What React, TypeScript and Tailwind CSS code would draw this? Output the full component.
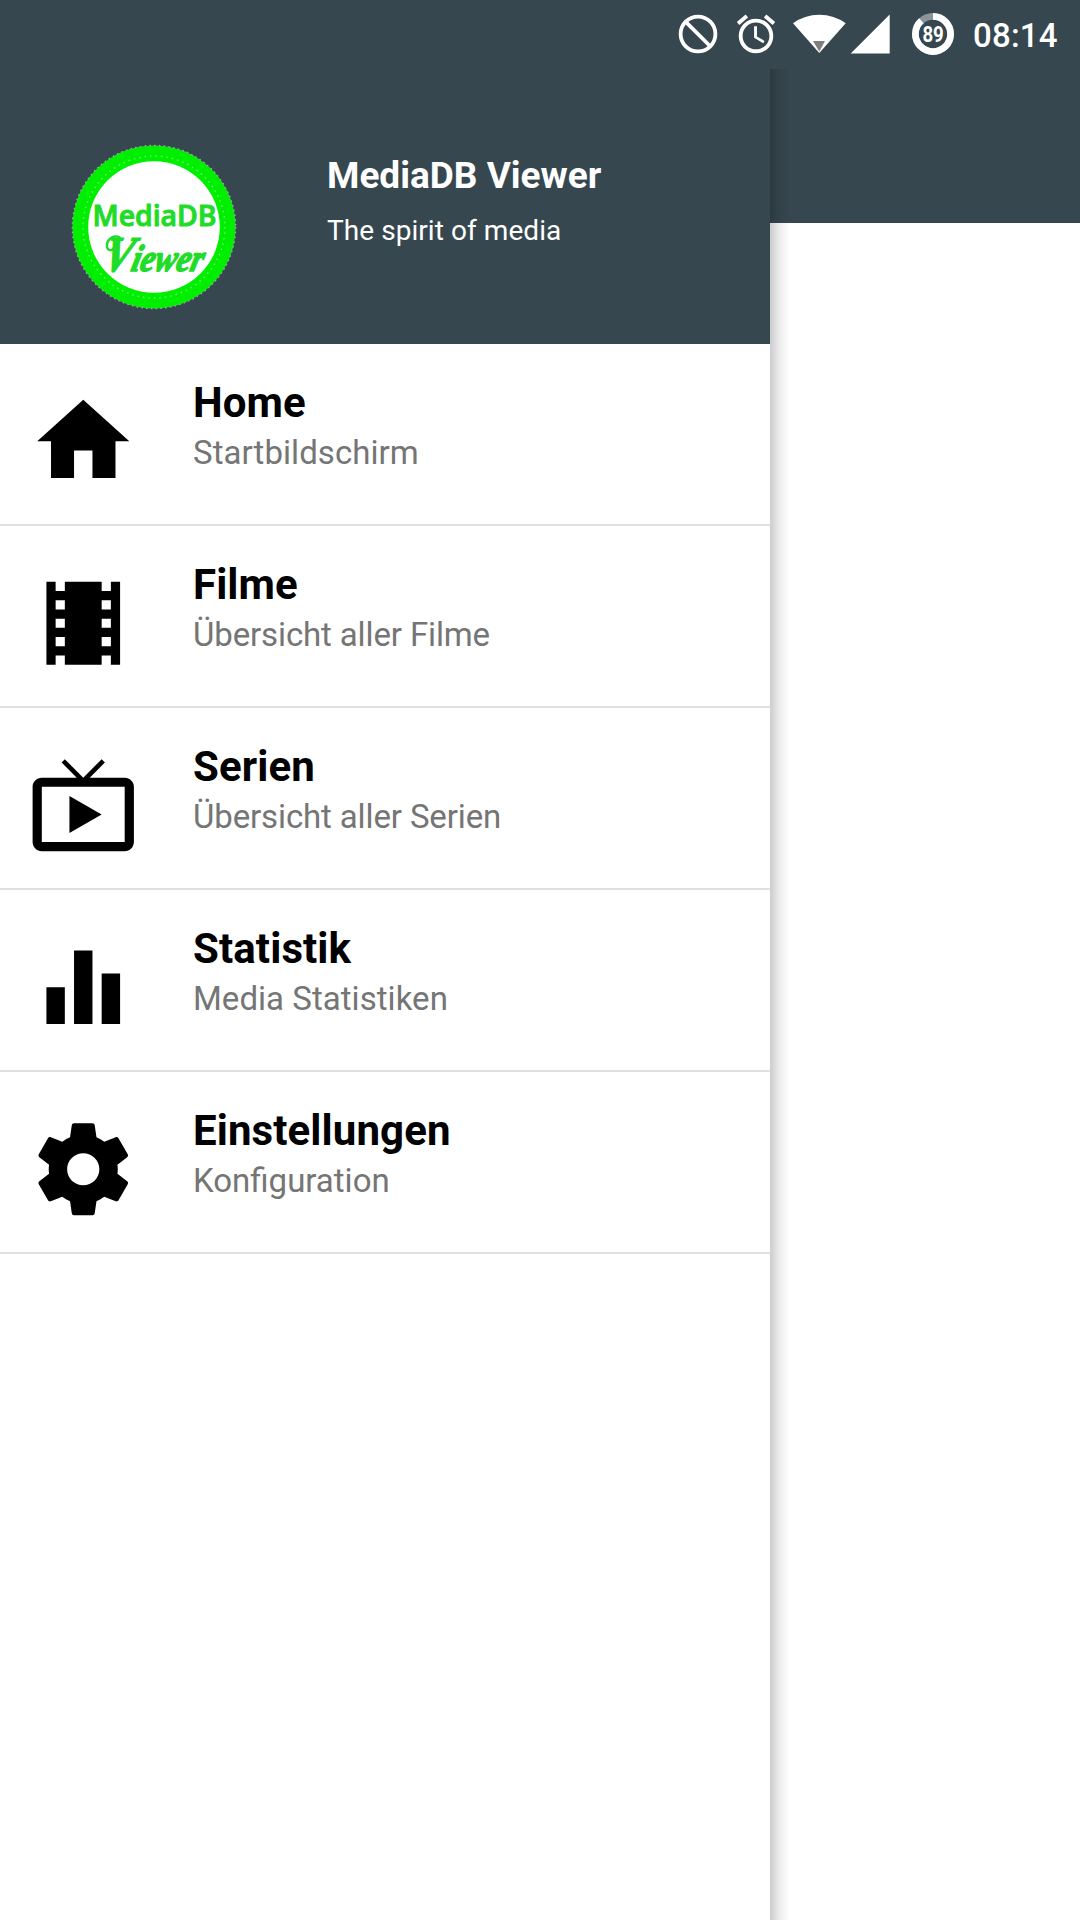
import React from "react";

const icons = {
  home: "M10 20v-6h4v6h5v-8h3L12 3 2 12h3v8z",
  movies:
    "M18 3v2h-2V3H8v2H6V3H4v18h2v-2h2v2h8v-2h2v2h2V3h-2zM8 17H6v-2h2v2zm0-4H6v-2h2v2zm0-4H6V7h2v2zm10 8h-2v-2h2v2zm0-4h-2v-2h2v2zm0-4h-2V7h2v2z",
  series:
    "M21 6h-7.59l3.29-3.29L16 2l-4 4-4-4-.7.71L10.59 6H3c-1.1 0-2 .89-2 2v12c0 1.1.9 2 2 2h18c1.1 0 2-.9 2-2V8c0-1.11-.9-2-2-2zm0 14H3V8h18v12zM9 10v8l7-4z",
  stats: "M4 20h4v-8H4v8zM10 20h4V4h-4v16zM16 9v11h4V9h-4z",
  settings:
    "M19.43 12.98c.04-.32.07-.64.07-.98s-.03-.66-.07-.98l2.11-1.65c.19-.15.24-.42.12-.64l-2-3.46c-.12-.22-.39-.3-.61-.22l-2.49 1c-.52-.4-1.08-.73-1.69-.98l-.38-2.65C14.46 2.18 14.25 2 14 2h-4c-.25 0-.46.18-.49.42l-.38 2.65c-.61.25-1.17.59-1.69.98l-2.49-1c-.23-.09-.49 0-.61.22l-2 3.46c-.13.22-.07.49.12.64l2.11 1.65c-.04.32-.07.65-.07.98s.03.66.07.98l-2.11 1.65c-.19.15-.24.42-.12.64l2 3.46c.12.22.39.3.61.22l2.49-1c.52.4 1.08.73 1.69.98l.38 2.65c.03.24.24.42.49.42h4c.25 0 .46-.18.49-.42l.38-2.65c.61-.25 1.17-.59 1.69-.98l2.49 1c.23.09.49 0 .61-.22l2-3.46c.12-.22.07-.49-.12-.64l-2.11-1.65zM12 15.5c-1.93 0-3.5-1.57-3.5-3.5s1.57-3.5 3.5-3.5 3.5 1.57 3.5 3.5-1.57 3.5-3.5 3.5z",
};

const items = [
  { icon: icons.home, title: "Home", subtitle: "Startbildschirm", tracking: "tracking-[0.06px]" },
  { icon: icons.movies, title: "Filme", subtitle: "Übersicht aller Filme", tracking: "tracking-[-0.13px]" },
  { icon: icons.series, title: "Serien", subtitle: "Übersicht aller Serien", tracking: "tracking-[-0.13px]" },
  { icon: icons.stats, title: "Statistik", subtitle: "Media Statistiken", tracking: "tracking-[0.04px]" },
  { icon: icons.settings, title: "Einstellungen", subtitle: "Konfiguration", tracking: "tracking-normal" },
];

function StatusBar() {
  return (
    <div className="flex h-[69px] shrink-0 items-start bg-[#37474f] pl-[678px] text-white">
      <svg className="mt-[14px] h-10 w-10 shrink-0" viewBox="0 0 40 40" fill="none" stroke="currentColor" strokeWidth="3.8">
        <circle cx="20" cy="20" r="17.4" />
        <path d="M8 8.2 32 32" />
      </svg>
      <svg className="mt-[11px] ml-[15px] h-[46px] w-[46px] shrink-0" viewBox="0 0 24 24" fill="currentColor">
        <path d="M22 5.72l-4.6-3.86-1.29 1.53 4.6 3.86L22 5.72zM7.88 3.39L6.6 1.86 2 5.71l1.29 1.53 4.59-3.85zM12.5 8H11v6l4.75 2.85.75-1.23-4-2.37V8zM12 4c-4.97 0-9 4.03-9 9s4.02 9 9 9 9-4.03 9-9-4.03-9-9-9zm0 16c-3.87 0-7-3.13-7-7s3.13-7 7-7 7 3.13 7 7-3.13 7-7 7z" />
      </svg>
      <svg className="mt-[14px] ml-[13px] h-10 w-[55px] shrink-0" viewBox="0 0 55 40">
        <path d="M1 9.3Q12.5.7 27.3.7T53.7 9.3L27.3 39Z" fill="white" />
        <path d="M21 27h12l-5.7 10.5Z" fill="#7f7f7f" />
      </svg>
      <svg className="mt-[14px] ml-[3px] h-10 w-10 shrink-0" viewBox="0 0 40 40" fill="currentColor">
        <path d="M.7 39.5h39V.6Z" />
      </svg>
      <svg className="mt-[13px] ml-[22px] h-[42px] w-[42px] shrink-0" viewBox="0 0 42 42" fill="none">
        <circle cx="21" cy="21" r="17.6" stroke="#8b9499" strokeWidth="6.8" />
        <circle cx="21" cy="21" r="17.6" stroke="white" strokeWidth="6.8" pathLength="100" strokeDasharray="88.5 11.5" transform="rotate(-90 21 21)" />
        <text x="10.4" y="29" fontSize="21.5" fontWeight="700" fill="white" textLength="21.4" lengthAdjust="spacingAndGlyphs">89</text>
      </svg>
      <span className="ml-[19px] pt-4 text-[33px] leading-[40px] font-medium tracking-[0.2px]">08:14</span>
    </div>
  );
}

function Logo() {
  return (
    <svg className="h-[166px] w-[166px] shrink-0" viewBox="0 0 166 166">
      <circle cx="83" cy="83" r="81.6" fill="#00ef00" />
      <circle cx="83" cy="83" r="81.6" fill="none" stroke="#9aa89f" strokeWidth="1.5" strokeDasharray="1.6 3.2" />
      <circle cx="83" cy="83" r="71" fill="none" stroke="#6df56d" strokeWidth="1.3" strokeDasharray="1.5 4" />
      <circle cx="83" cy="83" r="65.8" fill="white" />
      <text x="21.5" y="82.3" fontFamily="'Open Sans', sans-serif" fontSize="29" fontWeight="600" fill="#1fdc28" stroke="#1fdc28" strokeWidth="1" textLength="124" lengthAdjust="spacingAndGlyphs">MediaDB</text>
      <g fill="#1fdc28" stroke="#1fdc28">
        <text x="62" y="127" transform="skewX(-14)" fontFamily="'Liberation Serif', serif" fontStyle="italic" fontWeight="700" fontSize="38" strokeWidth="1.5" textLength="100" lengthAdjust="spacingAndGlyphs">
          <tspan fontSize="50">V</tspan>iewer
        </text>
        <path d="M50 95c-4-6-15-1-14 8 1 4 5 4 7 1" fill="none" strokeWidth="2.4" strokeLinecap="round" />
      </g>
    </svg>
  );
}

function DrawerHeader() {
  return (
    <div className="flex h-[275px] items-start bg-[#37474f] pl-[71px] text-white">
      <div className="pt-[75px]">
        <Logo />
      </div>
      <div className="ml-[90px] pt-[84px]">
        <h1 className="text-[37px] leading-[46px] font-bold">MediaDB Viewer</h1>
        <p className="mt-[14px] text-[28px] leading-[36px] tracking-[0.06px]">The spirit of media</p>
      </div>
    </div>
  );
}

type DrawerItemProps = { icon: string; title: string; subtitle: string; tracking: string };

function DrawerItem({ icon, title, subtitle, tracking }: DrawerItemProps) {
  return (
    <li className="flex h-[182px] items-start border-b-2 border-[#e0e0e0] pl-[27.5px]">
      <svg className="mt-[41.5px] h-[110.5px] w-[110.5px] shrink-0" viewBox="0 0 24 24" fill="black">
        <path d={icon} />
      </svg>
      <div className="ml-[55px] pt-[34px]">
        <h2 className="text-[42px] leading-[50px] font-bold tracking-[0.1px] text-black">{title}</h2>
        <p className={`text-[33px] leading-[50px] text-[#757575] ${tracking}`}>{subtitle}</p>
      </div>
    </li>
  );
}

export default function App() {
  return (
    <div className="flex h-[1920px] w-[1080px] flex-col overflow-hidden bg-white font-['Roboto',sans-serif]">
      <StatusBar />
      <div className="flex flex-1">
        <nav className="w-[770px] shrink-0 bg-white">
          <DrawerHeader />
          <ul>
            {items.map((item) => (
              <DrawerItem key={item.title} {...item} />
            ))}
          </ul>
        </nav>
        <main className="relative flex-1 bg-white">
          <div className="h-[154px] bg-[#37474f]" />
          <div className="absolute inset-y-0 left-0 w-5 bg-linear-to-r from-black/20 via-black/7 to-transparent" />
        </main>
      </div>
    </div>
  );
}
